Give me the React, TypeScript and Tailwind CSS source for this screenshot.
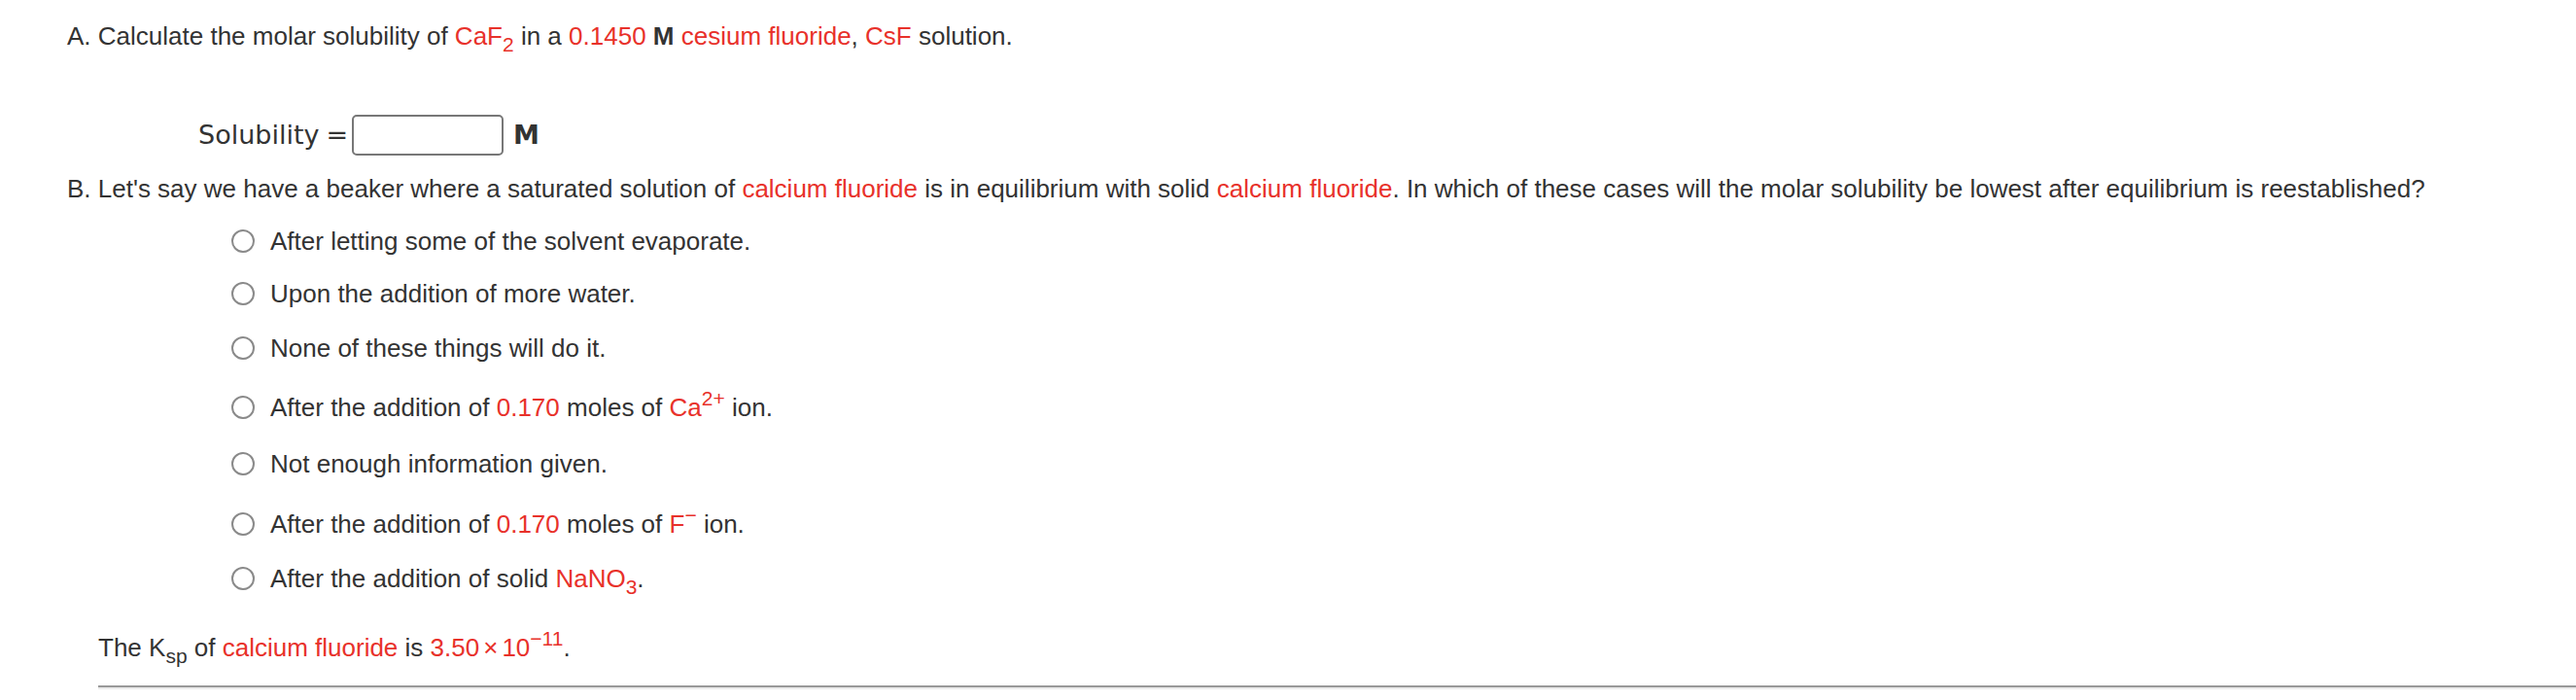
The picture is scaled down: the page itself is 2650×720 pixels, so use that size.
import React from "react";

const red = "text-[#e8312a]";

const Sub: React.FC<{ children: React.ReactNode; className?: string }> = ({ children, className }) => (
  <span className={"relative top-[7px] text-[21px] leading-none " + (className || "")}>{children}</span>
);

const Sup: React.FC<{ children: React.ReactNode; className?: string }> = ({ children, className }) => (
  <span className={"relative -top-[11px] text-[21px] leading-none " + (className || "")}>{children}</span>
);

const Radio: React.FC = () => (
  <span className="inline-block w-[24px] h-[24px] rounded-full border-2 border-[#8a8a8a] bg-white shrink-0" />
);

const Option: React.FC<{ mt: string; children: React.ReactNode }> = ({ mt, children }) => (
  <div className={"flex items-center pl-[238px] h-[30px] " + mt}>
    <Radio />
    <span className="ml-[16px] whitespace-nowrap">{children}</span>
  </div>
);

export default function App() {
  return (
    <main className="w-[2650px] h-[720px] bg-white text-[#333333] text-[26px] leading-[30px] font-['Liberation_Sans',Arial,sans-serif] overflow-hidden">
      <div className="pl-[69px] pt-[22px]">
        <p className="whitespace-nowrap">
          A. Calculate the molar solubility of <span className={red}>CaF<Sub>2</Sub></span> in a{" "}
          <span className={red}>0.1450</span> <b className="font-bold">M</b>{" "}
          <span className={red}>cesium fluoride</span>, <span className={red}>CsF</span> solution.
        </p>
      </div>

      <div className="flex items-center mt-[66px] pl-[204px] h-[42px] font-['DejaVu_Sans',Verdana,sans-serif] text-[27px]">
        <span>Solubility</span>
        <span className="ml-[7px]">=</span>
        <input type="text" className="ml-[4px] w-[156px] h-[42px] rounded-[5px] border-2 border-[#777777] bg-white outline-none" />
        <span className="ml-[10px] font-bold">M</span>
      </div>

      <div className="pl-[69px] mt-[19px]">
        <p className="whitespace-nowrap">
          B. Let's say we have a beaker where a saturated solution of <span className={red}>calcium fluoride</span> is in
          equilibrium with solid <span className={red}>calcium fluoride</span>. In which of these cases will the molar
          solubility be lowest after equilibrium is reestablished?
        </p>
      </div>

      <Option mt="mt-[24px]">After letting some of the solvent evaporate.</Option>
      <Option mt="mt-[24px]">Upon the addition of more water.</Option>
      <Option mt="mt-[26px]">None of these things will do it.</Option>
      <Option mt="mt-[31px]">
        After the addition of <span className={red}>0.170</span> moles of{" "}
        <span className={red}>
          Ca<Sup>2+</Sup>
        </span>{" "}
        ion.
      </Option>
      <Option mt="mt-[28px]">Not enough information given.</Option>
      <Option mt="mt-[32px]">
        After the addition of <span className={red}>0.170</span> moles of{" "}
        <span className={red}>
          F<Sup>−</Sup>
        </span>{" "}
        ion.
      </Option>
      <Option mt="mt-[26px]">
        After the addition of solid{" "}
        <span className={red}>
          NaNO<Sub>3</Sub>
        </span>
        .
      </Option>

      <div className="pl-[101px] mt-[41px]">
        <p className="whitespace-nowrap">
          The K<Sub>sp</Sub> of <span className={red}>calcium fluoride</span> is{" "}
          <span className={red}>
            3.50<span className="mx-[4px]">×</span>10<Sup>−11</Sup>
          </span>
          .
        </p>
      </div>

      <div className="ml-[101px] mt-[24px] h-[2px] bg-[#999999]" />
      <div className="ml-[101px] h-[2px] bg-[#ebebeb]" />
    </main>
  );
}
